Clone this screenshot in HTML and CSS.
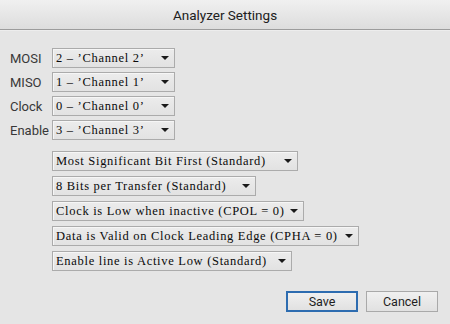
FILE: index.html
```html
<!DOCTYPE html>
<html>
<head>
<meta charset="utf-8">
<link rel="stylesheet" href="styles.css">
</head>
<body>
<div class="dialog">
  <div class="titlebar">Analyzer Settings</div>
  <div class="content">
    <div class="channels">
      <span class="label">MOSI</span>
      <div class="select short"><span class="val">2 – ’Channel 2’</span><span class="arrow"></span></div>
      <span class="label">MISO</span>
      <div class="select short"><span class="val">1 – ’Channel 1’</span><span class="arrow"></span></div>
      <span class="label">Clock</span>
      <div class="select short"><span class="val">0 – ’Channel 0’</span><span class="arrow"></span></div>
      <span class="label">Enable</span>
      <div class="select short"><span class="val">3 – ’Channel 3’</span><span class="arrow"></span></div>
    </div>
    <div class="options">
      <div class="select w-order"><span class="val">Most Significant Bit First (Standard)</span><span class="arrow"></span></div>
      <div class="select w-bits"><span class="val">8 Bits per Transfer (Standard)</span><span class="arrow"></span></div>
      <div class="select w-cpol"><span class="val">Clock is Low when inactive (CPOL = 0)</span><span class="arrow"></span></div>
      <div class="select w-cpha"><span class="val">Data is Valid on Clock Leading Edge (CPHA = 0)</span><span class="arrow"></span></div>
      <div class="select w-enable"><span class="val">Enable line is Active Low (Standard)</span><span class="arrow"></span></div>
    </div>
  </div>
  <div class="buttons">
    <button class="btn primary">Save</button>
    <button class="btn">Cancel</button>
  </div>
</div>
</body>
</html>
```

FILE: styles.css
```css
html, body {
  margin: 0;
  padding: 0;
}
body {
  width: 450px;
  height: 324px;
  background: #e5e5e5;
  font-family: Roboto, "Noto Sans", sans-serif;
  overflow: hidden;
}
.dialog {
  width: 450px;
  height: 324px;
  display: flex;
  flex-direction: column;
}
.titlebar {
  height: 29px;
  line-height: 31px;
  text-align: center;
  font-size: 13.5px;
  color: #202020;
  background: linear-gradient(#f0f0f0, #dddddd);
  border-bottom: 1px solid #9c9c9c;
  box-shadow: 0 1px 0 #ededed;
}
.content {
  padding: 18px 0 0 10px;
  flex: 1;
}
.channels {
  display: grid;
  grid-template-columns: 42px auto;
  row-gap: 4px;
  align-items: center;
  justify-items: start;
}
.label {
  font-size: 13px;
  color: #383838;
}
.select {
  box-sizing: border-box;
  height: 20px;
  display: flex;
  align-items: center;
  justify-content: space-between;
  padding: 0 5px 0 3px;
  border: 1px solid #ababab;
  box-shadow: inset 1px 1px 0 #f6f6f6;
  background: linear-gradient(#ececec, #e2e2e2);
  font-family: "Liberation Serif", serif;
  font-size: 12.5px;
  letter-spacing: 0.7px;
  color: #0a0a0a;
  white-space: nowrap;
}
.val {
  padding-top: 1px;
  margin-right: 4px;
}
.arrow {
  flex: none;
  width: 0;
  height: 0;
  border-left: 4px solid transparent;
  border-right: 4px solid transparent;
  border-top: 4px solid #1a1a1a;
}
.short { width: 123px; }
.options {
  margin: 11px 0 0 42px;
  display: flex;
  flex-direction: column;
  align-items: flex-start;
  gap: 5px;
}
.w-order { width: 246px; }
.w-bits { width: 204px; }
.w-cpol { width: 252px; }
.w-cpha { width: 307px; }
.w-enable { width: 240px; }
.buttons {
  display: flex;
  justify-content: flex-end;
  gap: 8px;
  padding: 0 12px 12px 0;
}
.btn {
  box-sizing: border-box;
  width: 72px;
  height: 21px;
  margin: 0;
  padding: 0;
  font-family: Roboto, "Noto Sans", sans-serif;
  font-size: 12.5px;
  color: #1e1e1e;
  background: linear-gradient(#f0f0f0, #e1e1e1);
  border: 1px solid #a9a9a9;
}
.btn.primary {
  border: 2px solid #2d6cb0;
}
```
